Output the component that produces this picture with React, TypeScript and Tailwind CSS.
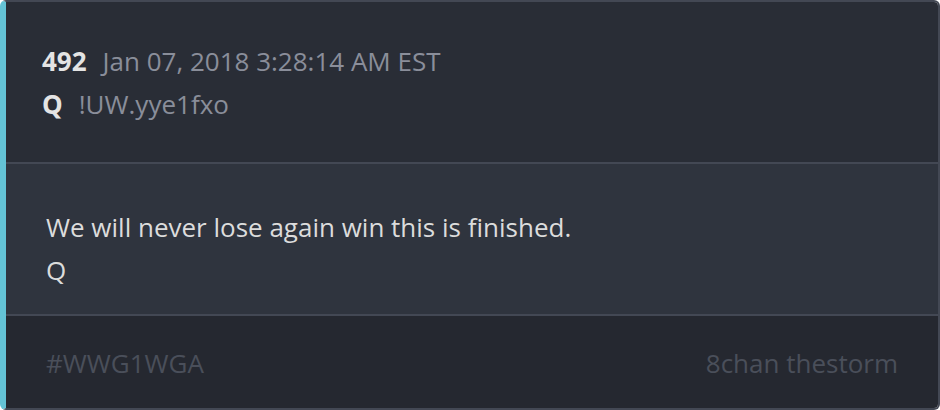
export default function App() {
  return (
    <div className="h-[410px] w-[940px] bg-white" style={{ fontFamily: '"Open Sans", sans-serif' }}>
      <article className="flex h-full w-full flex-col overflow-hidden rounded-md border-2 border-l-[6px] border-[#434854] border-l-[#64c3d6]">
        {/* Header */}
        <header className="h-[160px] bg-[#292d36] pl-[36px] pt-[38px] text-[26px] leading-[43px]">
          <div className="flex items-baseline gap-[16px]">
            <span className="font-bold text-[#e4e4e4]">492</span>
            <span className="text-[#8a8e9a]">Jan 07, 2018 3:28:14 AM EST</span>
          </div>
          <div className="flex items-baseline gap-[16px]">
            <span className="font-bold text-[#e4e4e4]">Q</span>
            <span className="text-[#8a8e9a]">!UW.yye1fxo</span>
          </div>
        </header>

        {/* Message */}
        <section className="h-[154px] border-y-2 border-[#434854] bg-[#2f343e] pl-[40px] pt-[42px] text-[26px] leading-[43px] text-[#dcdcdc]">
          <p>We will never lose again win this is finished.</p>
          <p>Q</p>
        </section>

        {/* Footer */}
        <footer className="flex flex-1 items-center justify-between bg-[#252830] px-[40px] pt-[2px] text-[26px] text-[#4a4f5a]">
          <span>#WWG1WGA</span>
          <span>8chan thestorm</span>
        </footer>
      </article>
    </div>
  )
}
